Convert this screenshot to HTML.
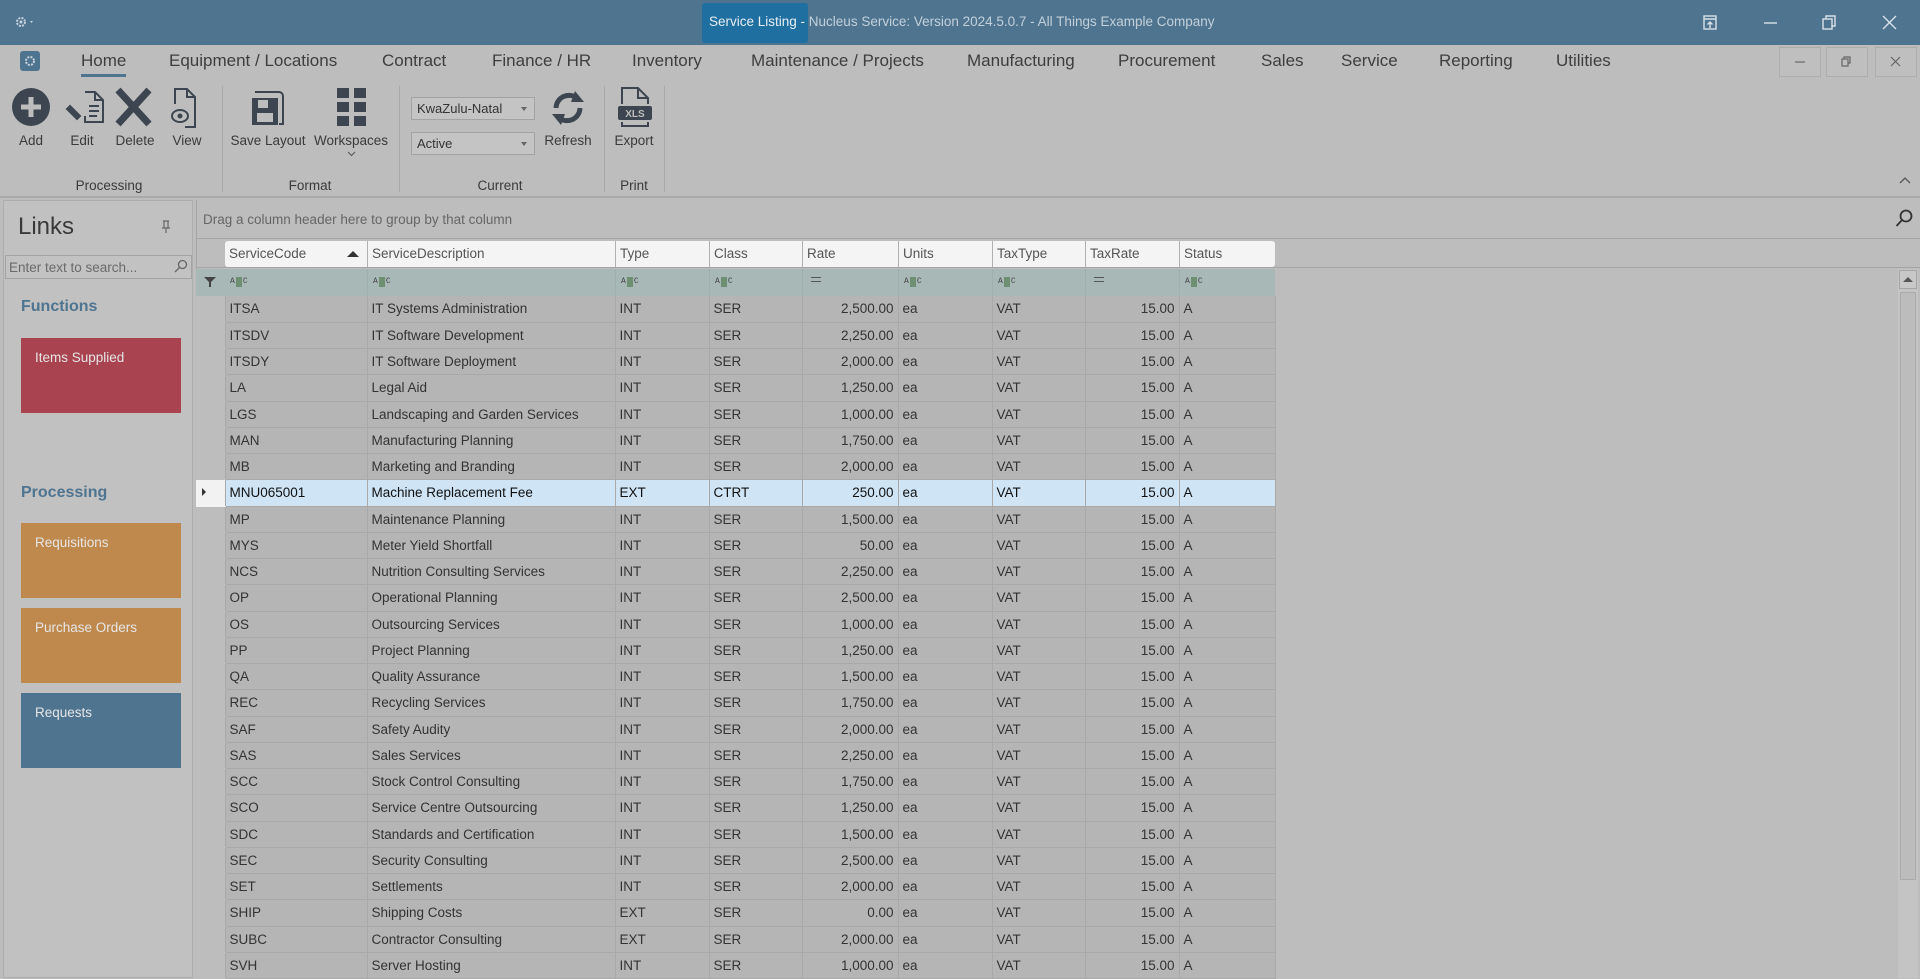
<!DOCTYPE html>
<html><head><meta charset="utf-8"><style>
*{box-sizing:border-box;margin:0;padding:0}
body{width:1920px;height:978px;overflow:hidden;background:#bdbdbd;font-family:"Liberation Sans",sans-serif;color:#3a3a3a;position:relative}
.a{position:absolute}
.title{left:0;top:0;width:1920px;height:45px;background:#4e7490}
.tab{position:absolute;top:51px;font-size:17px;color:#3e3e3e}
.ico{position:absolute;top:86px}
.lbl{position:absolute;top:133px;font-size:13.5px;color:#3a3a3a;text-align:center;width:90px}
.glbl{position:absolute;top:178px;font-size:13.5px;color:#3a3a3a;text-align:center;width:120px}
.sep{position:absolute;top:86px;width:1px;height:106px;background:#a8a8a8}
.combo{position:absolute;left:411px;width:124px;height:23px;border:1px solid #a3a3a3;background:#c4c4c4;font-size:13px;padding:3px 5px;color:#333}
.combo:after{content:"";position:absolute;right:7px;top:9px;border-left:3px solid transparent;border-right:3px solid transparent;border-top:4px solid #666}
table{border-collapse:collapse;table-layout:fixed;position:absolute;left:196px;top:296px}
td{height:26.25px;font-size:13.5px;color:#333;padding:0 4px;border-right:1px solid #a9a9a9;border-bottom:1px solid #a9a9a9;background:#b5b5b5;white-space:nowrap;overflow:hidden}
td:first-child{background:#bdbdbd;border-right:1px solid #a9a9a9;border-bottom:1px solid #bdbdbd}
td.r{text-align:right}
tr.sel td{background:#cfe5f6;color:#111}
tr.sel td:first-child{background:#f2f2f2;border-bottom-color:#f2f2f2}
.hd{position:absolute;top:241px;height:26px;font-size:13.5px;color:#555;padding:5px 4px;border-left:1px solid #b0b0b0}
.fl{position:absolute;top:269px;height:26px;border-left:1px solid #9fb0af}
.abc{position:absolute;top:7px;left:5px;font-size:8px;line-height:11px;color:#444;font-family:"Liberation Mono",monospace;white-space:nowrap;display:flex;align-items:center}
.abc b{display:inline-block;width:6px;height:10px;background:#6f8f72;margin:0 1px}
.eq{position:absolute;top:8px;left:8px;width:10px;height:5px;border-top:1.5px solid #555;border-bottom:1.5px solid #555}
.tile{position:absolute;left:21px;width:160px;height:75px;font-size:13.5px;color:#e6e6e6;padding:12px 14px}
.mdi{position:absolute;top:47px;width:42px;height:30px;border:1px solid #adadad;background:#bfbfbf}
</style></head><body>
<div class="a title"></div>
<div class="a" style="left:702px;top:3px;width:106px;height:40px;background:#1f6fa0;border-radius:3px"></div>
<div class="a" style="left:709px;top:14px;font-size:13.5px;color:#e8eef3;white-space:nowrap">Service Listing - <span style="color:#c3d0da">Nucleus Service: Version 2024.5.0.7 - All Things Example Company</span></div>
<svg class="a" style="left:14px;top:15px" width="36" height="16"><circle cx="7" cy="7" r="4" fill="none" stroke="#c8d3dc" stroke-width="2" stroke-dasharray="2 1.2"/><circle cx="7" cy="7" r="1.5" fill="#c8d3dc"/><path d="M33 6l3 0-1.5 2z" fill="#c8d3dc" transform="translate(-17 0)"/></svg>
<svg class="a" style="left:1700px;top:14px" width="220" height="18" fill="none" stroke="#d9e2ea" stroke-width="1.4"><rect x="4" y="2" width="12" height="13"/><path d="M4 5h12M10 14V8M7.5 10.5 10 8l2.5 2.5"/><path d="M64 9h13"/><rect x="123" y="5" width="9" height="10"/><path d="M126 5V2h9v10h-3"/><path d="M183 2l13 13M196 2l-13 13"/></svg>
<div class="a" style="left:20px;top:51px;width:20px;height:20px;background:#4e7490;border-radius:3px"></div>
<svg class="a" style="left:23px;top:54px" width="14" height="14"><circle cx="7" cy="7" r="4" fill="none" stroke="#c8d3dc" stroke-width="2" stroke-dasharray="2 1.2"/></svg>
<div class="tab" style="left:81px">Home</div>
<div class="a" style="left:81px;top:74px;width:45px;height:3px;background:#4e7490"></div>
<div class="tab" style="left:169px">Equipment / Locations</div>
<div class="tab" style="left:382px">Contract</div>
<div class="tab" style="left:492px">Finance / HR</div>
<div class="tab" style="left:632px">Inventory</div>
<div class="tab" style="left:751px">Maintenance / Projects</div>
<div class="tab" style="left:967px">Manufacturing</div>
<div class="tab" style="left:1118px">Procurement</div>
<div class="tab" style="left:1261px">Sales</div>
<div class="tab" style="left:1341px">Service</div>
<div class="tab" style="left:1439px">Reporting</div>
<div class="tab" style="left:1556px">Utilities</div>
<div class="mdi" style="left:1779px"></div><div class="mdi" style="left:1826px"></div><div class="mdi" style="left:1875px"></div>
<svg class="a" style="left:1779px;top:47px" width="140" height="30" fill="none" stroke="#666" stroke-width="1.2"><path d="M16 15h10"/><rect x="63" y="12" width="6" height="7"/><path d="M65 12v-2h6v6h-2"/><path d="M112 10l9 9M121 10l-9 9"/></svg>
<svg class="ico" style="left:12px" width="200" height="44">
<circle cx="19" cy="21" r="19" fill="#3d4650"/><path d="M19 11v20M9 21h20" stroke="#bdbdbd" stroke-width="5"/>
<g fill="none" stroke="#3d4650" stroke-width="2"><path d="M73 6h10l8 8v22H73v-6"/><path d="M83 6v8h8M77 20h10M77 25h10M77 30h8"/><path d="M58 20l10 10-3 3-10-10z" fill="#3d4650"/></g>
<path d="M106 4l31 34M137 4l-31 34" stroke="#3d4650" stroke-width="7"/>
<g fill="none" stroke="#3d4650" stroke-width="2"><path d="M163 18V3h12l8 8v30h-10"/><path d="M175 3v8h8"/><ellipse cx="168" cy="30" rx="8" ry="6"/></g><circle cx="168" cy="30" r="2.5" fill="#3d4650"/>
</svg>
<svg class="ico" style="left:245px" width="140" height="44">
<path d="M10 6h24a4 4 0 0 1 4 4v28h-4" fill="none" stroke="#3d4650" stroke-width="2"/><path d="M7 12h26v27H7z" fill="#3d4650"/><rect x="13" y="14" width="10" height="8" fill="#bdbdbd"/><rect x="12" y="27" width="16" height="9" fill="#bdbdbd"/>
<g fill="#3d4650"><rect x="92" y="2" width="12" height="10"/><rect x="109" y="2" width="12" height="10"/><rect x="92" y="16" width="12" height="10"/><rect x="109" y="16" width="12" height="10"/><rect x="92" y="30" width="12" height="10"/><rect x="109" y="30" width="12" height="10"/></g>
</svg>
<svg class="ico" style="left:548px" width="40" height="44"><g fill="none" stroke="#3d4650" stroke-width="5"><path d="M8 22a13 13 0 0 1 22-9"/><path d="M32 22a13 13 0 0 1-22 9"/></g><path d="M27 5l9 11-13 0z" fill="#3d4650"/><path d="M13 39l-9-11 13 0z" fill="#3d4650"/></svg>
<svg class="ico" style="left:616px" width="40" height="44"><path d="M6 18V2h16l10 10v6M6 36v4h26v-4" fill="none" stroke="#3d4650" stroke-width="2"/><path d="M22 2v10h10" fill="none" stroke="#3d4650" stroke-width="2"/><rect x="2" y="20" width="34" height="14" rx="2" fill="#3d4650"/><text x="19" y="31" font-size="10" font-weight="bold" fill="#bdbdbd" text-anchor="middle" font-family="Liberation Sans">XLS</text></svg>
<div class="lbl" style="left:-14px">Add</div><div class="lbl" style="left:37px">Edit</div><div class="lbl" style="left:90px">Delete</div><div class="lbl" style="left:142px">View</div>
<div class="lbl" style="left:223px">Save Layout</div><div class="lbl" style="left:306px">Workspaces</div>
<svg class="a" style="left:347px;top:151px" width="9" height="6"><path d="M1 1l3.5 3.5L8 1" fill="none" stroke="#555"/></svg>
<div class="lbl" style="left:523px">Refresh</div><div class="lbl" style="left:589px">Export</div>
<div class="combo" style="top:97px">KwaZulu-Natal</div>
<div class="combo" style="top:132px">Active</div>
<div class="sep" style="left:222px"></div><div class="sep" style="left:399px"></div><div class="sep" style="left:604px"></div><div class="sep" style="left:664px"></div>
<div class="glbl" style="left:49px">Processing</div><div class="glbl" style="left:250px">Format</div><div class="glbl" style="left:440px">Current</div><div class="glbl" style="left:574px">Print</div>
<svg class="a" style="left:1899px;top:176px" width="12" height="8"><path d="M1 7l5-5 5 5" fill="none" stroke="#555" stroke-width="1.3"/></svg>
<div class="a" style="left:0;top:196px;width:1920px;height:2px;background:#a9a9a9"></div>
<div class="a" style="left:3px;top:200px;width:190px;height:778px;border:1px solid #adadad;background:#c1c1c1"></div>
<div class="a" style="left:18px;top:213px;font-size:24px;color:#3a3a3a">Links</div>
<svg class="a" style="left:161px;top:220px" width="10" height="14" fill="none" stroke="#555"><path d="M2 1h6M3 1v7M7 1v7M1 8h8M5 8v5"/></svg>
<div class="a" style="left:5px;top:255px;width:187px;height:24px;border:1px solid #a3a3a3;background:#c2c2c2;font-size:13.5px;color:#6a6a6a;padding:4px 3px">Enter text to search...</div>
<svg class="a" style="left:174px;top:259px" width="14" height="14" fill="none" stroke="#666" stroke-width="1.3"><circle cx="8.5" cy="5.5" r="4"/><path d="M5.5 8.5 1 13"/></svg>
<div class="a" style="left:21px;top:298px;font-size:16px;font-weight:bold;color:#4e7490">Functions</div>
<div class="tile" style="top:338px;background:#a8434f">Items Supplied</div>
<div class="a" style="left:21px;top:484px;font-size:16px;font-weight:bold;color:#4e7490">Processing</div>
<div class="tile" style="top:523px;background:#bf894d">Requisitions</div>
<div class="tile" style="top:608px;background:#bf894d">Purchase Orders</div>
<div class="tile" style="top:693px;background:#4e7490">Requests</div>
<div class="a" style="left:196px;top:200px;width:1724px;height:778px;border-left:1px solid #a5a5a5;background:#bdbdbd"></div>
<div class="a" style="left:197px;top:238px;width:1723px;height:1px;background:#a5a5a5"></div>
<div class="a" style="left:203px;top:212px;font-size:13.5px;color:#666">Drag a column header here to group by that column</div>
<svg class="a" style="left:1895px;top:209px" width="18" height="20" fill="none" stroke="#333" stroke-width="1.8"><circle cx="11" cy="7" r="5.5"/><path d="M7 11 1.5 17"/></svg>
<div class="a" style="left:197px;top:267px;width:1723px;height:1px;background:#a5a5a5"></div>
<div class="a" style="left:225px;top:241px;width:1050px;height:26px;background:#f4f4f4;border-radius:3px"></div>
<div class="hd" style="left:225px;border:0">ServiceCode</div>
<svg class="a" style="left:347px;top:250px" width="12" height="8"><path d="M0 7l6-6 6 6z" fill="#333"/></svg>
<div class="hd" style="left:367px">ServiceDescription</div><div class="hd" style="left:615px">Type</div><div class="hd" style="left:709px">Class</div><div class="hd" style="left:802px">Rate</div><div class="hd" style="left:898px">Units</div><div class="hd" style="left:992px">TaxType</div><div class="hd" style="left:1085px">TaxRate</div><div class="hd" style="left:1179px">Status</div>
<div class="a" style="left:196px;top:269px;width:1079px;height:27px;background:#a7b8b7"></div>
<svg class="a" style="left:204px;top:276px" width="12" height="12"><path d="M0 1h12L7 6v5H5V6z" fill="#444"/></svg>
<div class="fl" style="left:225px;border:0"><span class="abc">A<b></b>C</span></div>
<div class="fl" style="left:367px"><span class="abc">A<b></b>C</span></div>
<div class="fl" style="left:615px"><span class="abc">A<b></b>C</span></div>
<div class="fl" style="left:709px"><span class="abc">A<b></b>C</span></div>
<div class="fl" style="left:802px"><span class="eq"></span></div>
<div class="fl" style="left:898px"><span class="abc">A<b></b>C</span></div>
<div class="fl" style="left:992px"><span class="abc">A<b></b>C</span></div>
<div class="fl" style="left:1085px"><span class="eq"></span></div>
<div class="fl" style="left:1179px"><span class="abc">A<b></b>C</span></div>
<table>
<colgroup><col style="width:29px"><col style="width:142px"><col style="width:248px"><col style="width:94px"><col style="width:93px"><col style="width:96px"><col style="width:94px"><col style="width:93px"><col style="width:94px"><col style="width:96px"></colgroup>
<tr><td></td><td>ITSA</td><td>IT Systems Administration</td><td>INT</td><td>SER</td><td class="r">2,500.00</td><td>ea</td><td>VAT</td><td class="r">15.00</td><td>A</td></tr>
<tr><td></td><td>ITSDV</td><td>IT Software Development</td><td>INT</td><td>SER</td><td class="r">2,250.00</td><td>ea</td><td>VAT</td><td class="r">15.00</td><td>A</td></tr>
<tr><td></td><td>ITSDY</td><td>IT Software Deployment</td><td>INT</td><td>SER</td><td class="r">2,000.00</td><td>ea</td><td>VAT</td><td class="r">15.00</td><td>A</td></tr>
<tr><td></td><td>LA</td><td>Legal Aid</td><td>INT</td><td>SER</td><td class="r">1,250.00</td><td>ea</td><td>VAT</td><td class="r">15.00</td><td>A</td></tr>
<tr><td></td><td>LGS</td><td>Landscaping and Garden Services</td><td>INT</td><td>SER</td><td class="r">1,000.00</td><td>ea</td><td>VAT</td><td class="r">15.00</td><td>A</td></tr>
<tr><td></td><td>MAN</td><td>Manufacturing Planning</td><td>INT</td><td>SER</td><td class="r">1,750.00</td><td>ea</td><td>VAT</td><td class="r">15.00</td><td>A</td></tr>
<tr><td></td><td>MB</td><td>Marketing and Branding</td><td>INT</td><td>SER</td><td class="r">2,000.00</td><td>ea</td><td>VAT</td><td class="r">15.00</td><td>A</td></tr>
<tr class="sel"><td><svg width="8" height="10"><path d="M2 1l4 4-4 4z" fill="#333"/></svg></td><td>MNU065001</td><td>Machine Replacement Fee</td><td>EXT</td><td>CTRT</td><td class="r">250.00</td><td>ea</td><td>VAT</td><td class="r">15.00</td><td>A</td></tr>
<tr><td></td><td>MP</td><td>Maintenance Planning</td><td>INT</td><td>SER</td><td class="r">1,500.00</td><td>ea</td><td>VAT</td><td class="r">15.00</td><td>A</td></tr>
<tr><td></td><td>MYS</td><td>Meter Yield Shortfall</td><td>INT</td><td>SER</td><td class="r">50.00</td><td>ea</td><td>VAT</td><td class="r">15.00</td><td>A</td></tr>
<tr><td></td><td>NCS</td><td>Nutrition Consulting Services</td><td>INT</td><td>SER</td><td class="r">2,250.00</td><td>ea</td><td>VAT</td><td class="r">15.00</td><td>A</td></tr>
<tr><td></td><td>OP</td><td>Operational Planning</td><td>INT</td><td>SER</td><td class="r">2,500.00</td><td>ea</td><td>VAT</td><td class="r">15.00</td><td>A</td></tr>
<tr><td></td><td>OS</td><td>Outsourcing Services</td><td>INT</td><td>SER</td><td class="r">1,000.00</td><td>ea</td><td>VAT</td><td class="r">15.00</td><td>A</td></tr>
<tr><td></td><td>PP</td><td>Project Planning</td><td>INT</td><td>SER</td><td class="r">1,250.00</td><td>ea</td><td>VAT</td><td class="r">15.00</td><td>A</td></tr>
<tr><td></td><td>QA</td><td>Quality Assurance</td><td>INT</td><td>SER</td><td class="r">1,500.00</td><td>ea</td><td>VAT</td><td class="r">15.00</td><td>A</td></tr>
<tr><td></td><td>REC</td><td>Recycling Services</td><td>INT</td><td>SER</td><td class="r">1,750.00</td><td>ea</td><td>VAT</td><td class="r">15.00</td><td>A</td></tr>
<tr><td></td><td>SAF</td><td>Safety Audity</td><td>INT</td><td>SER</td><td class="r">2,000.00</td><td>ea</td><td>VAT</td><td class="r">15.00</td><td>A</td></tr>
<tr><td></td><td>SAS</td><td>Sales Services</td><td>INT</td><td>SER</td><td class="r">2,250.00</td><td>ea</td><td>VAT</td><td class="r">15.00</td><td>A</td></tr>
<tr><td></td><td>SCC</td><td>Stock Control Consulting</td><td>INT</td><td>SER</td><td class="r">1,750.00</td><td>ea</td><td>VAT</td><td class="r">15.00</td><td>A</td></tr>
<tr><td></td><td>SCO</td><td>Service Centre Outsourcing</td><td>INT</td><td>SER</td><td class="r">1,250.00</td><td>ea</td><td>VAT</td><td class="r">15.00</td><td>A</td></tr>
<tr><td></td><td>SDC</td><td>Standards and Certification</td><td>INT</td><td>SER</td><td class="r">1,500.00</td><td>ea</td><td>VAT</td><td class="r">15.00</td><td>A</td></tr>
<tr><td></td><td>SEC</td><td>Security Consulting</td><td>INT</td><td>SER</td><td class="r">2,500.00</td><td>ea</td><td>VAT</td><td class="r">15.00</td><td>A</td></tr>
<tr><td></td><td>SET</td><td>Settlements</td><td>INT</td><td>SER</td><td class="r">2,000.00</td><td>ea</td><td>VAT</td><td class="r">15.00</td><td>A</td></tr>
<tr><td></td><td>SHIP</td><td>Shipping Costs</td><td>EXT</td><td>SER</td><td class="r">0.00</td><td>ea</td><td>VAT</td><td class="r">15.00</td><td>A</td></tr>
<tr><td></td><td>SUBC</td><td>Contractor Consulting</td><td>EXT</td><td>SER</td><td class="r">2,000.00</td><td>ea</td><td>VAT</td><td class="r">15.00</td><td>A</td></tr>
<tr><td></td><td>SVH</td><td>Server Hosting</td><td>INT</td><td>SER</td><td class="r">1,000.00</td><td>ea</td><td>VAT</td><td class="r">15.00</td><td>A</td></tr>
</table>
<div class="a" style="left:1898px;top:269px;width:20px;height:709px;background:#c4c4c4"></div>
<div class="a" style="left:1899px;top:270px;width:18px;height:19px;border:1px solid #a5a5a5;background:#c8c8c8"></div>
<svg class="a" style="left:1903px;top:276px" width="10" height="6"><path d="M0 6l5-5 5 5z" fill="#555"/></svg>
<div class="a" style="left:1900px;top:292px;width:16px;height:588px;background:#bcbcbc;border:1px solid #aaa"></div>
</body></html>
